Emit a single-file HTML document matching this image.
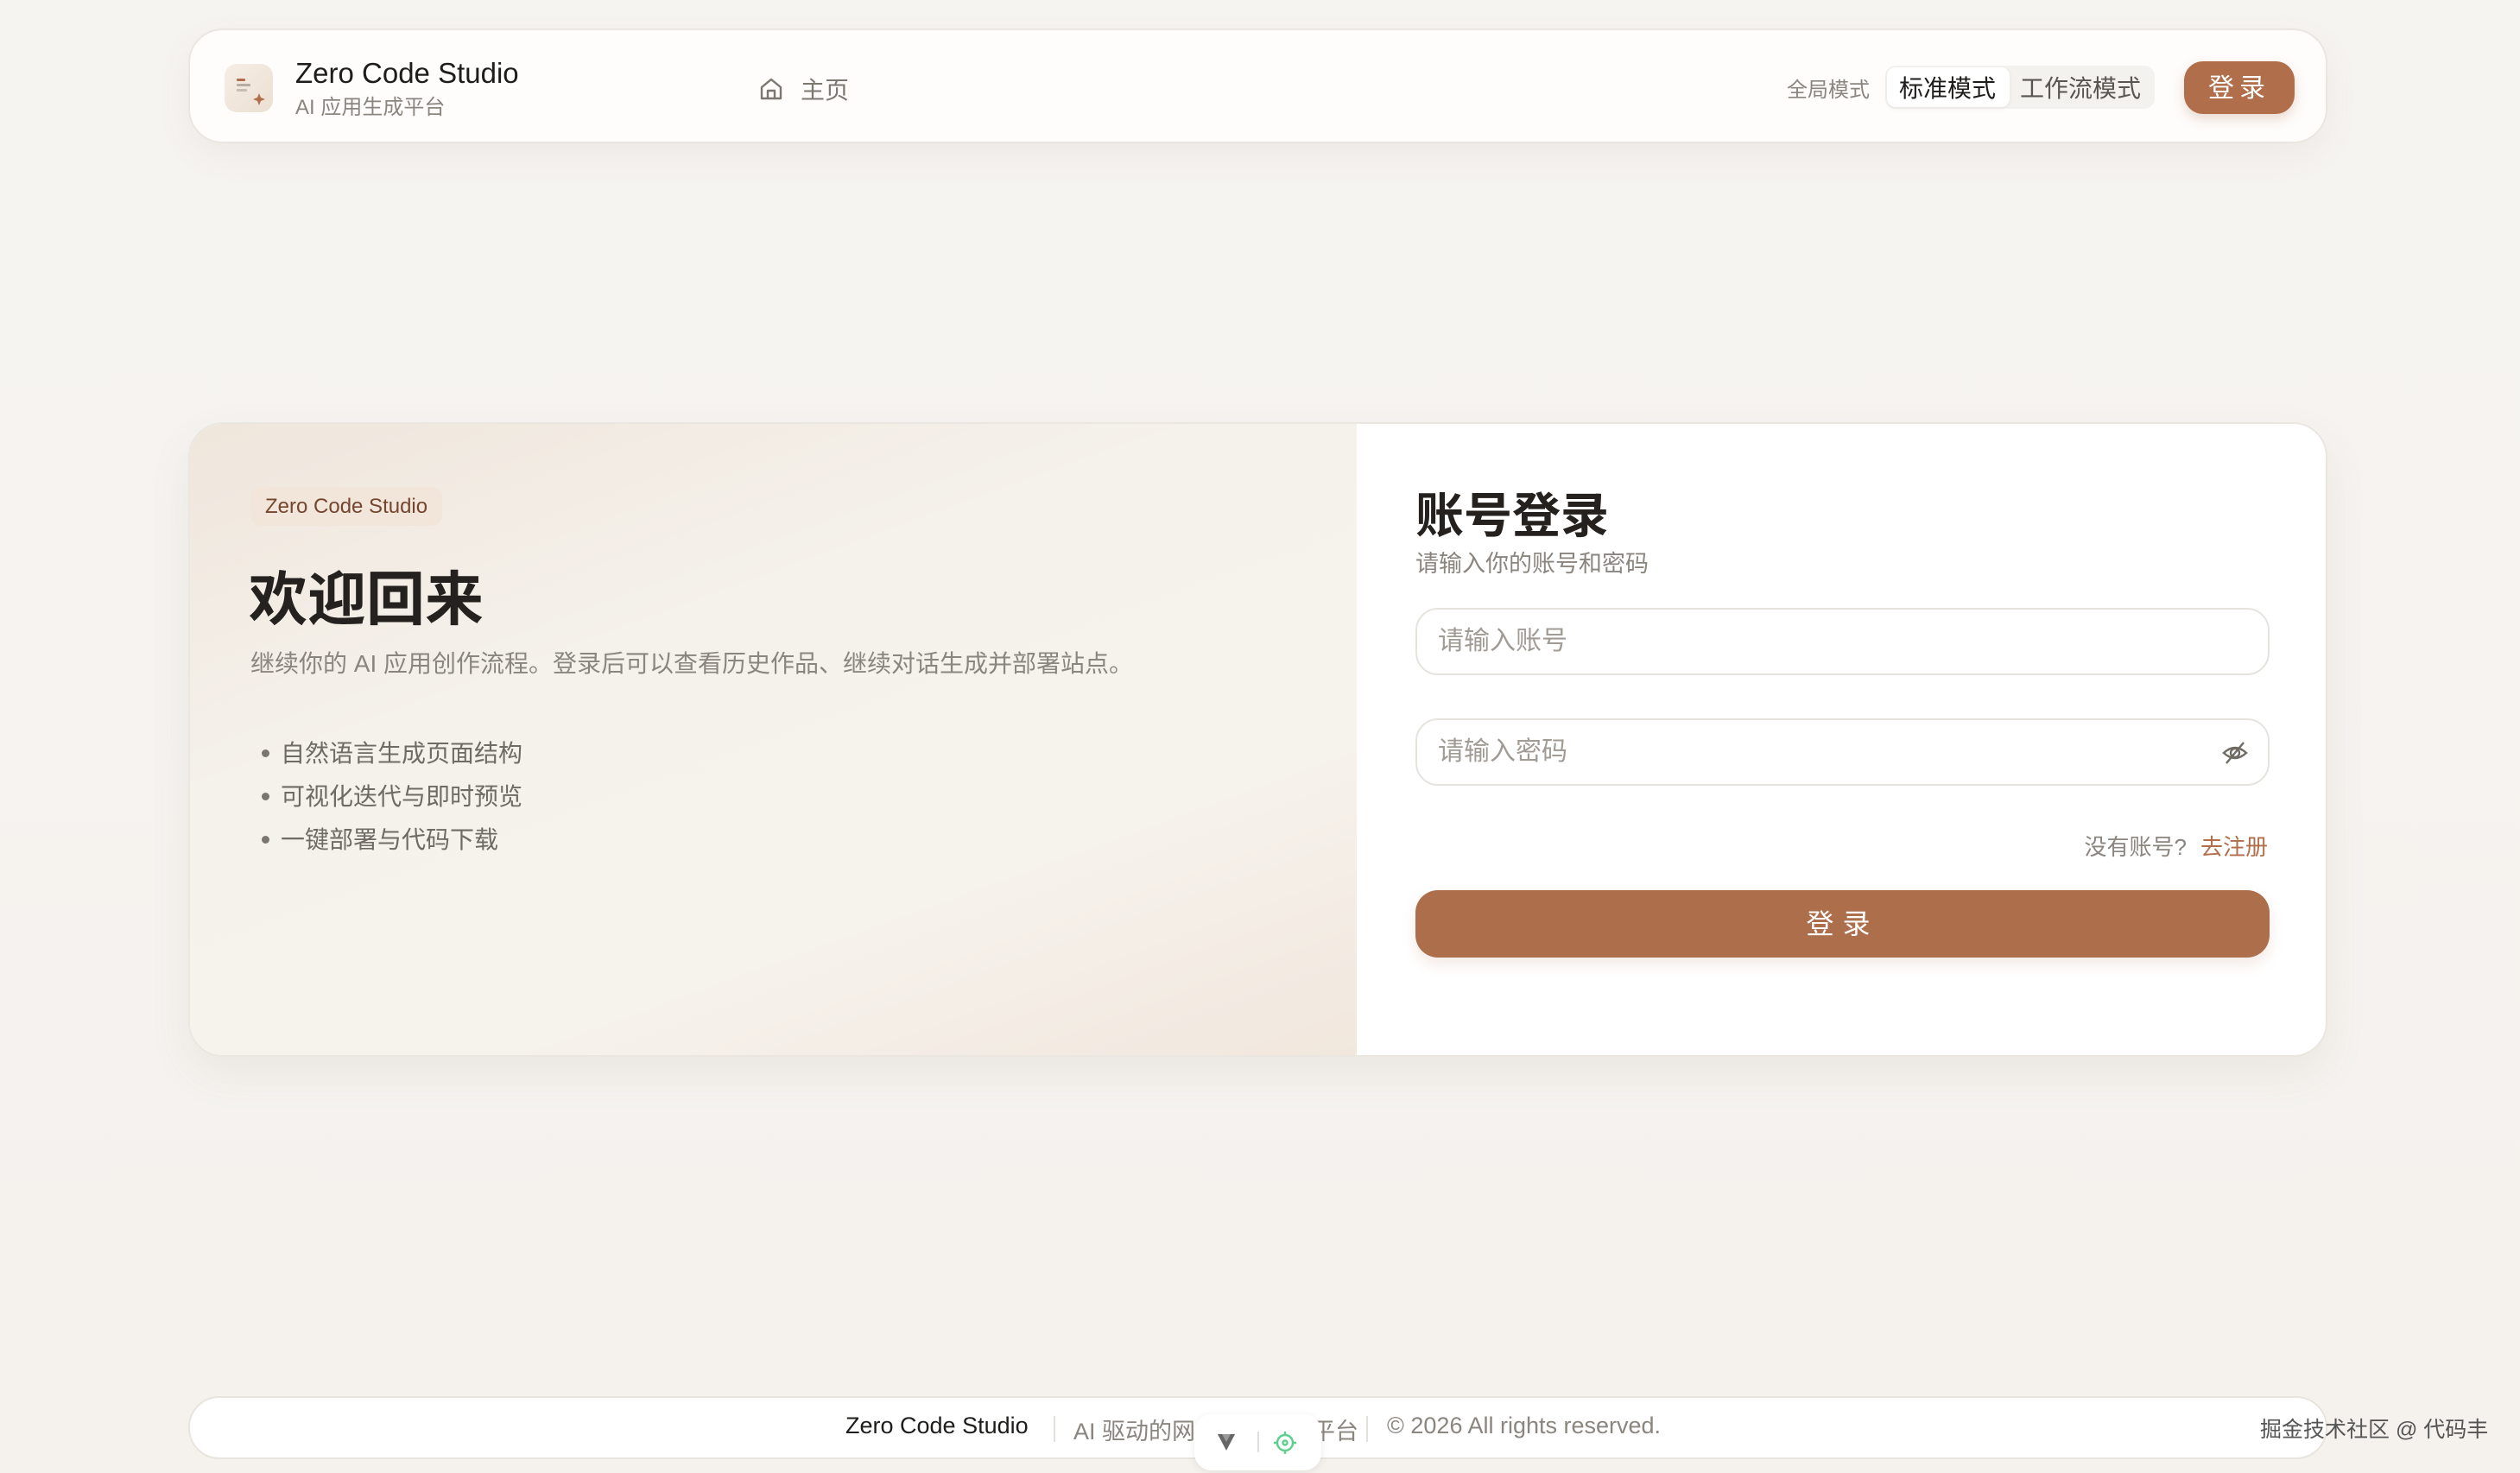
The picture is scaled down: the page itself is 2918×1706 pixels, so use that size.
<!DOCTYPE html>
<html><head><meta charset="utf-8"><style>
*{box-sizing:border-box;margin:0;padding:0}
body{width:2918px;height:1706px;overflow:hidden;background:linear-gradient(180deg,#f6f4f1 0%,#f5f2ee 100%);font-family:"Liberation Sans","Noto Sans CJK SC",sans-serif;position:relative;color:#2a2622}
.hdr{position:absolute;left:218px;top:33px;width:2477px;height:133px;background:#fefdfc;border:2px solid #ebe6df;border-radius:40px;box-shadow:0 14px 40px rgba(120,100,80,.07)}
.logo{position:absolute;left:260px;top:74px;width:56px;height:56px;border-radius:14px;background:linear-gradient(135deg,#f6eee6,#ecdfd2)}
.t1{position:absolute;left:342px;top:66px;font-size:33px;color:#1f1d1b}
.t2{position:absolute;left:342px;top:104px;font-size:24px;color:#8a857f}
.home{position:absolute;left:878px;top:88px}
.hometx{position:absolute;left:927px;top:83px;font-size:28px;color:#7b7670}
.gm{position:absolute;left:2069px;top:84px;font-size:24px;color:#8a857f}
.seg{position:absolute;left:2183px;top:76px;width:312px;height:50px;background:#f4f2ef;border-radius:12px}
.seg .a{position:absolute;left:2px;top:2px;width:142px;height:46px;background:#fff;border-radius:10px;box-shadow:0 2px 6px rgba(0,0,0,.06)}
.seg span{position:absolute;top:5px;font-size:28px}
.lbtn{position:absolute;left:2529px;top:71px;width:128px;height:61px;border-radius:22px;background:#b06e4b;color:#fff;font-size:30px;text-align:center;line-height:63px;letter-spacing:6px;box-shadow:0 6px 14px rgba(176,110,75,.25)}
.card{position:absolute;left:218px;top:489px;width:2477px;height:735px;border:2px solid #ebe6df;border-radius:40px;overflow:hidden;background:#fff;box-shadow:0 20px 50px rgba(120,100,80,.08)}
.left{position:absolute;left:0;top:0;width:1351px;height:100%;background:linear-gradient(160deg,#efe6dc 0%,#f5f1eb 35%,#f6f2ec 70%,#f1e7dd 100%)}
.badge{position:absolute;left:70px;top:73px;padding:0 17px;height:45px;line-height:45px;border-radius:12px;background:#f2e6da;color:#74462f;font-size:24px}
.h1{position:absolute;left:68px;top:148px;font-size:68px;font-weight:bold;color:#24211e}
.desc{position:absolute;left:70px;top:256px;font-size:28px;color:#8a857f}
.li{position:absolute;left:105px;font-size:28px;color:#6f6a64}
.li:before{content:"";position:absolute;left:-22px;top:17px;width:9px;height:9px;border-radius:50%;background:#7a756f}
.h2{position:absolute;left:1419px;top:62px;font-size:56px;font-weight:bold;color:#24211e}
.sub{position:absolute;left:1419px;top:140px;font-size:27px;color:#8a857f}
.inp{position:absolute;left:1419px;width:989px;height:78px;border:2px solid #e6e3df;border-radius:26px;font-size:30px;color:#a09b95;padding-left:24px;line-height:74px}
.reg{position:absolute;right:67px;top:470px;font-size:26px;color:#8a857f}
.reg b{font-weight:normal;color:#b06e4b;margin-left:16px}
.btn{position:absolute;left:1419px;top:540px;width:989px;height:78px;border-radius:26px;background:#ad6e4c;color:#fff;font-size:32px;text-align:center;line-height:78px;letter-spacing:10px;box-shadow:0 8px 16px rgba(176,110,75,.15)}
.ftr{position:absolute;left:218px;top:1617px;width:2477px;height:73px;background:#fff;border:2px solid #e8e4de;border-radius:36px}
.fx{position:absolute;top:1636px;font-size:27px;color:#8a857f}
.sep{position:absolute;top:1640px;width:2px;height:30px;background:#e3dfda}
.wm{position:absolute;left:2617px;top:1636px;font-size:25px;color:#555}
.fw{position:absolute;left:1383px;top:1638px;width:147px;height:65px;background:#fff;border-radius:20px;box-shadow:0 2px 10px rgba(0,0,0,.08)}
</style></head><body>
<div class="hdr"></div>
<div class="logo"><svg width="56" height="56" viewBox="0 0 56 56"><rect x="14" y="17" width="10" height="3" rx="1" fill="#b06e4b"/><rect x="14" y="23" width="16" height="3" rx="1" fill="#b9aca0"/><rect x="14" y="29" width="12" height="3" rx="1" fill="#c9bdb2"/><path d="M40 34 L42 39 L47 41 L42 43 L40 48 L38 43 L33 41 L38 39Z" fill="#b06e4b"/></svg></div>
<div class="t1">Zero Code Studio</div>
<div class="t2">AI 应用生成平台</div>
<svg class="home" width="30" height="30" viewBox="0 0 30 30" fill="none" stroke="#7b7670" stroke-width="2.4" stroke-linejoin="round"><path d="M4 13 L15 4 L26 13 V26 H4Z"/><path d="M11 26 V17 H19 V26"/></svg>
<div class="hometx">主页</div>
<div class="gm">全局模式</div>
<div class="seg"><div class="a"></div><span style="left:16px;color:#1f1d1b">标准模式</span><span style="left:156px;color:#5a5550">工作流模式</span></div>
<div class="lbtn">登录</div>
<div class="card">
<div class="left"></div>
<div class="badge">Zero Code Studio</div>
<div class="h1">欢迎回来</div>
<div class="desc">继续你的 AI 应用创作流程。登录后可以查看历史作品、继续对话生成并部署站点。</div>
<div class="li" style="top:360px">自然语言生成页面结构</div>
<div class="li" style="top:410px">可视化迭代与即时预览</div>
<div class="li" style="top:460px">一键部署与代码下载</div>
<div class="h2">账号登录</div>
<div class="sub">请输入你的账号和密码</div>
<div class="inp" style="top:213px">请输入账号</div>
<div class="inp" style="top:341px">请输入密码<svg style="position:absolute;right:22px;top:24px" width="32" height="28" viewBox="0 0 32 28" fill="none" stroke="#6f6a64" stroke-width="2.4"><path d="M3 14 Q16 2 29 14 Q16 26 3 14Z"/><circle cx="16" cy="14" r="5"/><path d="M26 2 L6 26"/></svg></div>
<div class="reg">没有账号?<b>去注册</b></div>
<div class="btn">登录</div>
</div>
<div class="ftr"></div>
<div class="fx" style="left:979px;color:#1f1d1b">Zero Code Studio</div>
<div class="sep" style="left:1220px"></div>
<div class="fx" style="left:1243px">AI 驱动的网站应用构建平台</div>
<div class="sep" style="left:1582px"></div>
<div class="fx" style="left:1606px">© 2026 All rights reserved.</div>
<div class="fw"><svg style="position:absolute;left:25px;top:20px" width="24" height="24" viewBox="0 0 24 24"><path d="M2 3 H22 L12 22Z" fill="#666"/><path d="M7 3 L12 12 L17 3" fill="#999"/></svg><div style="position:absolute;left:73px;top:20px;width:2px;height:24px;background:#ddd"></div><svg style="position:absolute;left:88px;top:16px" width="34" height="34" viewBox="0 0 34 34" fill="none" stroke="#5cd08a" stroke-width="2.4"><circle cx="17" cy="17" r="9"/><circle cx="17" cy="17" r="2.5"/><path d="M17 4V8M17 26V30M4 17H8M26 17H30"/></svg></div>
<div class="wm">掘金技术社区 @ 代码丰</div>
</body></html>
